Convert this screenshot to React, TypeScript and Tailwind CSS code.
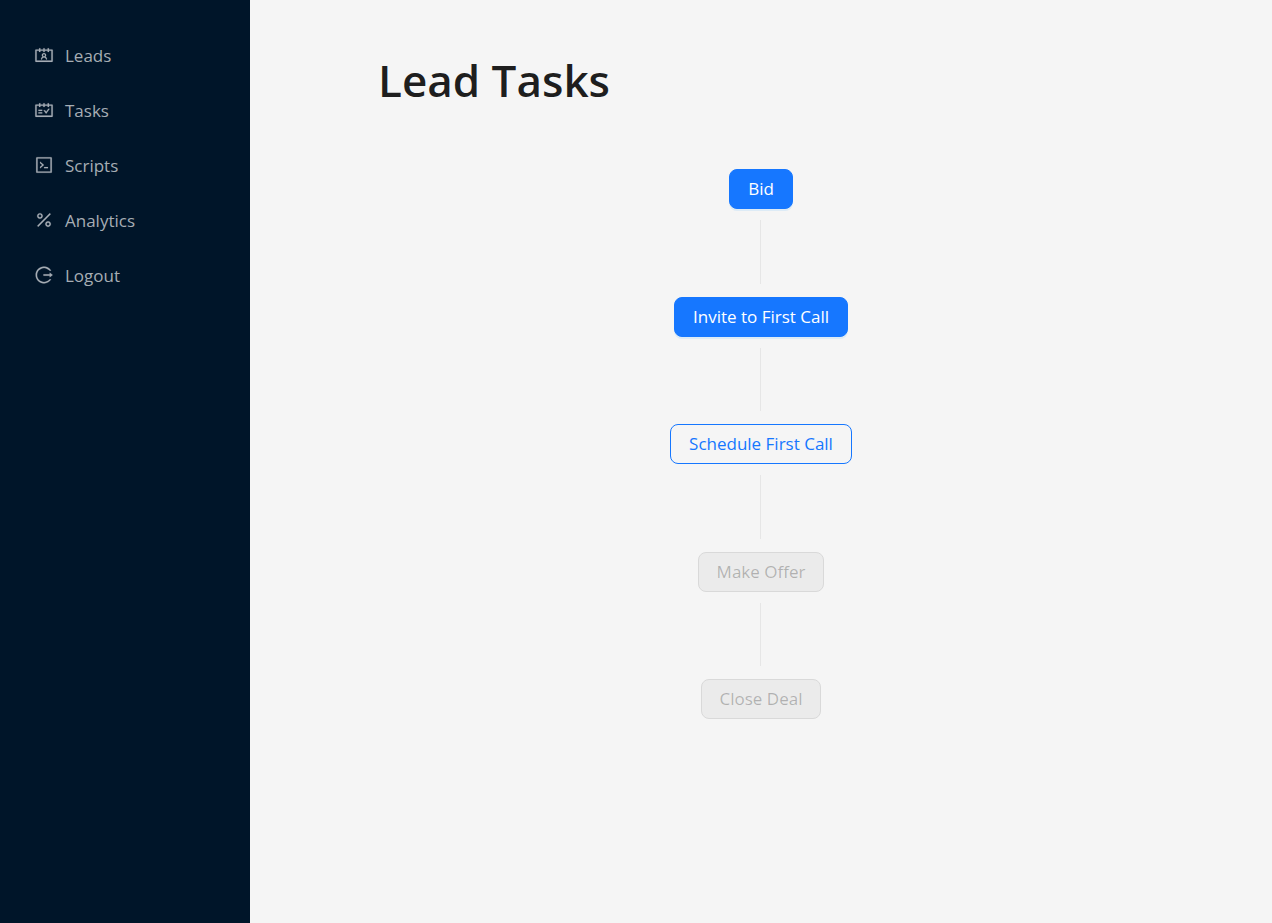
import {
  AiOutlineCode,
  AiOutlineContacts,
  AiOutlineLogout,
  AiOutlinePercentage,
  AiOutlineSchedule,
} from 'react-icons/ai';
import type { IconType } from 'react-icons';
import { Fragment } from 'react';

type Stage = 'done' | 'current' | 'locked';

const links: { label: string; icon: IconType }[] = [
  { label: 'Leads', icon: AiOutlineContacts },
  { label: 'Tasks', icon: AiOutlineSchedule },
  { label: 'Scripts', icon: AiOutlineCode },
  { label: 'Analytics', icon: AiOutlinePercentage },
  { label: 'Logout', icon: AiOutlineLogout },
];

const tasks: { label: string; stage: Stage }[] = [
  { label: 'Bid', stage: 'done' },
  { label: 'Invite to First Call', stage: 'done' },
  { label: 'Schedule First Call', stage: 'current' },
  { label: 'Make Offer', stage: 'locked' },
  { label: 'Close Deal', stage: 'locked' },
];

const stageStyles: Record<Stage, string> = {
  done: 'border-[#1677ff] bg-[#1677ff] text-white shadow-[0_2px_0_rgba(5,145,255,0.1)]',
  current: 'border-[#1677ff] text-[#1677ff]',
  locked: 'border-[#d9d9d9] bg-black/4 text-black/25',
};

function Sidebar() {
  return (
    <nav className="w-[250px] shrink-0 bg-[#001529] pt-[30px]">
      <ul className="flex flex-col gap-[5px]">
        {links.map(({ label, icon: Icon }) => (
          <li key={label}>
            <a
              href="#"
              className="flex h-[50px] items-center gap-[11px] pl-[34px] text-[17px] text-[#a6adb4] hover:text-white"
            >
              <Icon className="size-5 stroke-[8]" aria-hidden="true" />
              <span className="pt-0.5">{label}</span>
            </a>
          </li>
        ))}
      </ul>
    </nav>
  );
}

export default function App() {
  return (
    <div className="flex min-h-screen bg-[#f5f5f5] font-['Open_Sans','Noto_Sans',sans-serif]">
      <Sidebar />
      <main className="flex-1 px-[128px] pt-[50px]">
        <h1 className="text-[44px] leading-[60px] font-semibold text-black/88">Lead Tasks</h1>
        <div className="mt-[59px] flex h-[550px] flex-col items-center">
          {tasks.map(({ label, stage }, i) => (
            <Fragment key={label}>
              {i > 0 && <div className="mt-[11px] mb-[13px] w-0.5 flex-1 border-l border-black/6" />}
              <button
                type="button"
                disabled={stage === 'locked'}
                className={`h-10 shrink-0 rounded-lg border px-[18px] text-[17px] whitespace-nowrap ${stageStyles[stage]}`}
              >
                {label}
              </button>
            </Fragment>
          ))}
        </div>
      </main>
    </div>
  );
}
